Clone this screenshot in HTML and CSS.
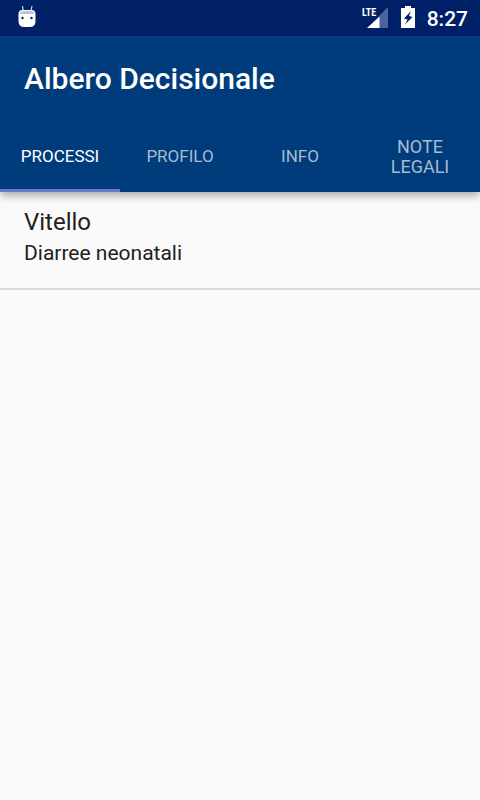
FILE: index.html
```html
<!DOCTYPE html>
<html lang="it">
<head>
    <meta charset="UTF-8">
    <meta name="viewport" content="width=device-width, initial-scale=1.0">
    <title>Albero Decisionale</title>
    <link rel="stylesheet" href="styles.css">
</head>
<body>
    <div class="status-bar">
        <svg class="debug-icon" width="20" height="24" viewBox="0 0 20 24" aria-hidden="true">
            <path d="M5.500 1l.8 5M15 1l-1 5" stroke="#d5dbe8" stroke-width="1.200" fill="none"/>
            <path d="M1.500 9q0-4 4-4h9q4 0 4 4v7q0 6-6 6h-5q-6 0-6-6z" fill="#fff"/>
            <path d="M3 9q0-3 3-3h8q3 0 3 3z" fill="#bcc5da"/>
            <circle cx="5.500" cy="13" r="1.200" fill="#002068"/>
            <circle cx="14.500" cy="13" r="1.200" fill="#002068"/>
        </svg>
        <div class="status-icons">
            <svg class="signal-icon" width="26" height="24" viewBox="0 0 26 24" aria-label="LTE">
                <path d="M26 2v21H17V11z" fill="#4d639a"/>
                <path d="M17.500 11.500V23H5z" fill="#fff"/>
                <text class="network-type" x="0" y="11">LTE</text>
            </svg>
            <svg class="battery-icon" width="14" height="24" viewBox="0 0 14 24" aria-hidden="true">
                <path d="M4 1h6v2h4v20H0V3h4z" fill="#fff"/>
                <path d="M10 6L3 13.500l3.500 1L4 19.500l7.500-7.500-3.500-1z" fill="#002068"/>
            </svg>
            <span class="clock">8:27</span>
        </div>
    </div>

    <header class="app-bar">
        <h1 class="app-title">Albero Decisionale</h1>
        <nav class="tabs">
            <a class="tab active" href="#processi">PROCESSI</a>
            <a class="tab" href="#profilo">PROFILO</a>
            <a class="tab" href="#info">INFO</a>
            <a class="tab tab-multiline" href="#note-legali">NOTE LEGALI</a>
        </nav>
    </header>

    <main id="processi">
        <ul class="process-list">
            <li class="process-item">
                <h2 class="process-name">Vitello</h2>
                <p class="process-description">Diarree neonatali</p>
            </li>
        </ul>
    </main>
</body>
</html>
```

FILE: styles.css
```css
* {
    margin: 0;
    padding: 0;
    box-sizing: border-box;
}

body {
    font-family: Roboto, sans-serif;
    background: #fafafa;
    color: #212121;
    min-height: 100vh;
}

.status-bar {
    display: flex;
    justify-content: space-between;
    align-items: center;
    height: 36px;
    padding: 0 12px 0 17px;
    background: #002068;
    color: white;
}

.status-bar svg {
    display: block;
    margin-bottom: 2px;
}

.status-icons {
    display: flex;
    align-items: center;
}

.signal-icon {
    margin-right: 13px;
}

.battery-icon {
    margin-right: 12px;
}

.network-type {
    font-family: "Roboto Condensed", "Liberation Sans Narrow", Roboto, sans-serif;
    font-size: 10px;
    font-weight: bold;
    fill: white;
}

.clock {
    padding-top: 2px;
    font-size: 21px;
    font-weight: 500;
    line-height: 34px;
}

.app-bar {
    position: relative;
    background: #003c7b;
    box-shadow: 0 4px 8px rgba(0, 0, 0, 0.3);
}

.app-title {
    padding: 2px 24px 0;
    color: white;
    font-size: 30px;
    font-weight: 500;
    line-height: 82px;
}

.tabs {
    display: grid;
    grid-template-columns: repeat(4, 1fr);
}

.tab {
    display: flex;
    justify-content: center;
    align-items: center;
    height: 72px;
    padding: 3px 18px 0;
    border-bottom: 3px solid transparent;
    color: #a6bbd1;
    font-size: 17px;
    line-height: 20px;
    text-align: center;
    text-decoration: none;
}

.tab.active {
    color: white;
    border-bottom-color: #6979cf;
}

.tab-multiline {
    padding-top: 5px;
    font-size: 18px;
}

.process-list {
    list-style: none;
}

.process-item {
    padding: 15px 24px 20px;
    border-bottom: 2px solid #dadada;
}

.process-name {
    font-size: 24px;
    font-weight: 400;
    line-height: 31px;
}

.process-description {
    font-size: 21px;
    line-height: 30px;
}
```
